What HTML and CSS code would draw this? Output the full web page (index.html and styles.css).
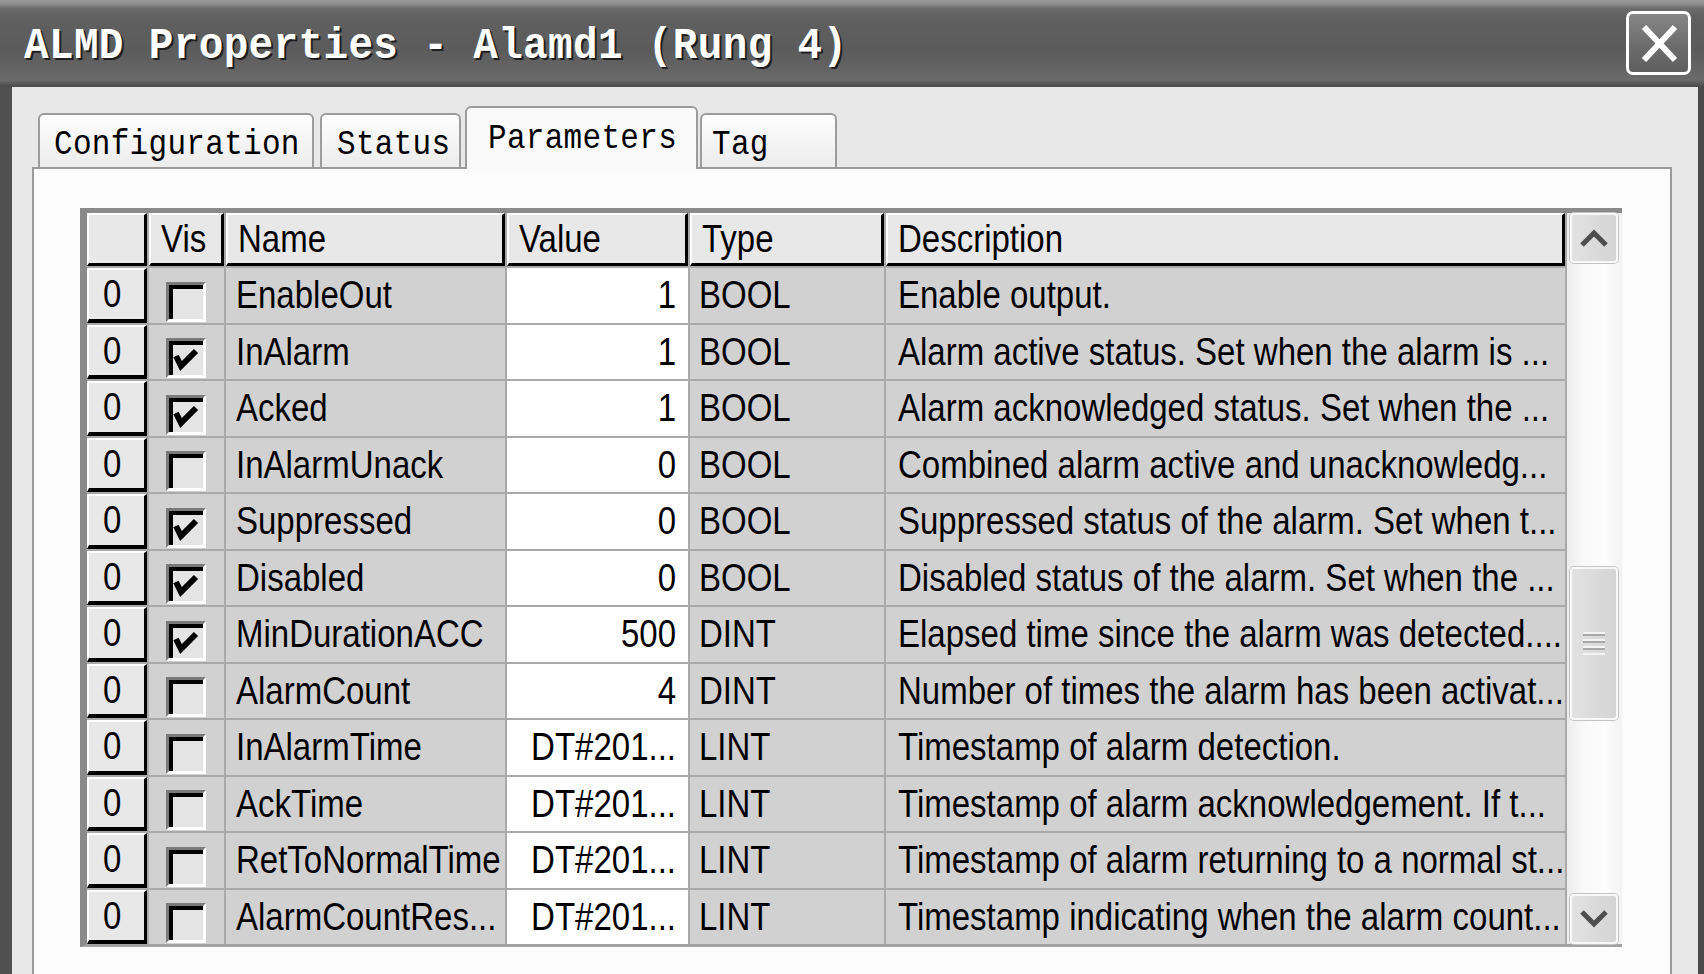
FILE: index.html
```html
<!DOCTYPE html>
<html>
<head>
<meta charset="utf-8">
<title>ALMD Properties</title>
<link rel="stylesheet" href="styles.css">
</head>
<body>
<div class="window">
  <div class="titlebar">
    <div class="title">ALMD Properties - Alamd1 (Rung 4)</div>
    <div class="close">
      <svg width="59" height="58" viewBox="0 0 59 58"><line x1="15" y1="13" x2="46" y2="46"/><line x1="46" y1="13" x2="15" y2="46"/></svg>
    </div>
  </div>
  <div class="body">
    <div class="tabs">
      <div class="tab tab-config"><span class="lbl">Configuration</span></div>
      <div class="tab tab-status"><span class="lbl">Status</span></div>
      <div class="tab tab-params"><span class="lbl">Parameters</span></div>
      <div class="tab tab-tag"><span class="lbl">Tag</span></div>
    </div>
    <div class="panel">
      <div class="grid">
        <div class="table">
          <div class="hc corner"></div>
          <div class="hc"><span class="tx">Vis</span></div>
          <div class="hc"><span class="tx">Name</span></div>
          <div class="hc"><span class="tx">Value</span></div>
          <div class="hc"><span class="tx">Type</span></div>
          <div class="hc"><span class="tx">Description</span></div>

          <div class="rh"><span class="tx">0</span></div>
          <div class="c vis"><div class="cb"></div></div>
          <div class="c"><span class="tx">EnableOut</span></div>
          <div class="c val"><span class="tx">1</span></div>
          <div class="c type"><span class="tx">BOOL</span></div>
          <div class="c desc"><span class="tx">Enable output.</span></div>

          <div class="rh"><span class="tx">0</span></div>
          <div class="c vis"><div class="cb"><svg width="34" height="34" viewBox="0 0 34 34"><polyline points="7,15 12,25 27,10"/></svg></div></div>
          <div class="c"><span class="tx">InAlarm</span></div>
          <div class="c val"><span class="tx">1</span></div>
          <div class="c type"><span class="tx">BOOL</span></div>
          <div class="c desc"><span class="tx">Alarm active status. Set when the alarm is ...</span></div>

          <div class="rh"><span class="tx">0</span></div>
          <div class="c vis"><div class="cb"><svg width="34" height="34" viewBox="0 0 34 34"><polyline points="7,15 12,25 27,10"/></svg></div></div>
          <div class="c"><span class="tx">Acked</span></div>
          <div class="c val"><span class="tx">1</span></div>
          <div class="c type"><span class="tx">BOOL</span></div>
          <div class="c desc"><span class="tx">Alarm acknowledged status. Set when the ...</span></div>

          <div class="rh"><span class="tx">0</span></div>
          <div class="c vis"><div class="cb"></div></div>
          <div class="c"><span class="tx">InAlarmUnack</span></div>
          <div class="c val"><span class="tx">0</span></div>
          <div class="c type"><span class="tx">BOOL</span></div>
          <div class="c desc"><span class="tx">Combined alarm active and unacknowledg...</span></div>

          <div class="rh"><span class="tx">0</span></div>
          <div class="c vis"><div class="cb"><svg width="34" height="34" viewBox="0 0 34 34"><polyline points="7,15 12,25 27,10"/></svg></div></div>
          <div class="c"><span class="tx">Suppressed</span></div>
          <div class="c val"><span class="tx">0</span></div>
          <div class="c type"><span class="tx">BOOL</span></div>
          <div class="c desc"><span class="tx">Suppressed status of the alarm. Set when t...</span></div>

          <div class="rh"><span class="tx">0</span></div>
          <div class="c vis"><div class="cb"><svg width="34" height="34" viewBox="0 0 34 34"><polyline points="7,15 12,25 27,10"/></svg></div></div>
          <div class="c"><span class="tx">Disabled</span></div>
          <div class="c val"><span class="tx">0</span></div>
          <div class="c type"><span class="tx">BOOL</span></div>
          <div class="c desc"><span class="tx">Disabled status of the alarm. Set when the ...</span></div>

          <div class="rh"><span class="tx">0</span></div>
          <div class="c vis"><div class="cb"><svg width="34" height="34" viewBox="0 0 34 34"><polyline points="7,15 12,25 27,10"/></svg></div></div>
          <div class="c"><span class="tx">MinDurationACC</span></div>
          <div class="c val"><span class="tx">500</span></div>
          <div class="c type"><span class="tx">DINT</span></div>
          <div class="c desc"><span class="tx">Elapsed time since the alarm was detected....</span></div>

          <div class="rh"><span class="tx">0</span></div>
          <div class="c vis"><div class="cb"></div></div>
          <div class="c"><span class="tx">AlarmCount</span></div>
          <div class="c val"><span class="tx">4</span></div>
          <div class="c type"><span class="tx">DINT</span></div>
          <div class="c desc"><span class="tx">Number of times the alarm has been activat...</span></div>

          <div class="rh"><span class="tx">0</span></div>
          <div class="c vis"><div class="cb"></div></div>
          <div class="c"><span class="tx">InAlarmTime</span></div>
          <div class="c val"><span class="tx">DT#201...</span></div>
          <div class="c type"><span class="tx">LINT</span></div>
          <div class="c desc"><span class="tx">Timestamp of alarm detection.</span></div>

          <div class="rh"><span class="tx">0</span></div>
          <div class="c vis"><div class="cb"></div></div>
          <div class="c"><span class="tx">AckTime</span></div>
          <div class="c val"><span class="tx">DT#201...</span></div>
          <div class="c type"><span class="tx">LINT</span></div>
          <div class="c desc"><span class="tx">Timestamp of alarm acknowledgement. If t...</span></div>

          <div class="rh"><span class="tx">0</span></div>
          <div class="c vis"><div class="cb"></div></div>
          <div class="c"><span class="tx">RetToNormalTime</span></div>
          <div class="c val"><span class="tx">DT#201...</span></div>
          <div class="c type"><span class="tx">LINT</span></div>
          <div class="c desc"><span class="tx">Timestamp of alarm returning to a normal st...</span></div>

          <div class="rh"><span class="tx">0</span></div>
          <div class="c vis"><div class="cb"></div></div>
          <div class="c"><span class="tx">AlarmCountRes...</span></div>
          <div class="c val"><span class="tx">DT#201...</span></div>
          <div class="c type"><span class="tx">LINT</span></div>
          <div class="c desc"><span class="tx">Timestamp indicating when the alarm count...</span></div>
        </div>
        <div class="scrollbar">
          <div class="sbtn up"><svg width="30" height="20" viewBox="0 0 30 20"><polyline points="3,17 15,5 27,17"/></svg></div>
          <div class="thumb"><svg width="22" height="24" viewBox="0 0 22 24"><rect class="g1" x="0" y="0" width="22" height="2"/><rect class="g2" x="0" y="2" width="22" height="2"/><rect class="g1" x="0" y="7" width="22" height="2"/><rect class="g2" x="0" y="9" width="22" height="2"/><rect class="g1" x="0" y="14" width="22" height="2"/><rect class="g2" x="0" y="16" width="22" height="2"/><rect class="g1" x="0" y="21" width="22" height="2"/></svg></div>
          <div class="sbtn down"><svg width="30" height="20" viewBox="0 0 30 20"><polyline points="3,3 15,15 27,3"/></svg></div>
        </div>
      </div>
    </div>
  </div>
</div>
</body>
</html>
```

FILE: styles.css
```css
html, body {
  margin: 0;
  padding: 0;
}

body {
  width: 1704px;
  height: 974px;
  overflow: hidden;
  background: #e8e8e8;
  font-family: "Liberation Sans", Arial, sans-serif;
  color: #000;
}

.window {
  width: 1704px;
  height: 974px;
  display: flex;
  flex-direction: column;
}

/* ---------- title bar ---------- */
.titlebar {
  flex: none;
  height: 87px;
  box-sizing: border-box;
  display: flex;
  align-items: center;
  padding: 0 13px 0 24px;
  background: linear-gradient(to bottom,
    #9b9b9b 0, #8c8c8c 4px, #6e6e6e 8px, #606060 16px,
    #5b5b5b 50px, #636363 68px, #6b6b6b 80px, #565656 84px, #4a4a4a 87px);
}

.title {
  font-family: "Liberation Mono", "DejaVu Sans Mono", monospace;
  font-weight: bold;
  font-size: 41px;
  letter-spacing: 0.35px;
  color: #fff;
  text-shadow: 2px 2px 0 #1e1e1e;
  white-space: nowrap;
  transform: scaleY(1.1);
  margin-top: 4px;
}

.close {
  margin-left: auto;
  margin-top: -2px;
  width: 65px;
  height: 64px;
  box-sizing: border-box;
  border: 3px solid #fff;
  border-radius: 7px;
  background: linear-gradient(#868686, #6c6c6c 55%, #5f5f5f);
  display: flex;
  align-items: center;
  justify-content: center;
}

.close svg {
  display: block;
}

.close line {
  stroke: #fff;
  stroke-width: 6;
}

/* ---------- dialog body ---------- */
.body {
  flex: 1;
  min-height: 0;
  display: flex;
  flex-direction: column;
  border-left: 12px solid #505050;
  border-right: 6px solid #4a4a4a;
  padding: 0 26px 0 20px;
}

.tabs {
  flex: none;
  height: 80px;
  display: flex;
  align-items: flex-end;
  padding-left: 6px;
}

.tab {
  position: relative;
  box-sizing: border-box;
  height: 54px;
  border: 2px solid #9c9c9c;
  border-bottom: 0;
  border-radius: 6px 6px 0 0;
  background: linear-gradient(#fefefe, #ececec);
  font-family: "Liberation Mono", "DejaVu Sans Mono", monospace;
  font-size: 31px;
  letter-spacing: 0.3px;
  display: flex;
  align-items: center;
  white-space: nowrap;
}

.tab .lbl {
  display: inline-block;
  transform: scaleY(1.15);
  margin-top: 6px;
}

.tab-config {
  width: 276px;
  padding-left: 14px;
  margin-right: 6px;
}

.tab-status {
  width: 141px;
  padding-left: 15px;
  margin-right: 4px;
}

.tab-params {
  width: 233px;
  height: 63px;
  padding-left: 21px;
  margin-right: 2px;
  margin-bottom: -2px;
  z-index: 2;
  background: #fafafa;
}

.tab-params .lbl {
  margin-top: 0;
}

.tab-tag {
  width: 137px;
  padding-left: 10px;
}

.panel {
  flex: 1;
  min-height: 0;
  background: #fcfcfc;
  border: 2px solid #9a9a9a;
  border-bottom: 0;
  padding: 39px 0 0 46px;
}

/* ---------- grid ---------- */
.grid {
  width: 1542px;
  box-sizing: border-box;
  display: flex;
  gap: 2px;
  background: #a9a9a9;
  border-top: 5px solid #8a8a8a;
  border-left: 7px solid #8a8a8a;
  border-bottom: 3px solid #a2a2a2;
}

.table {
  display: grid;
  grid-template-columns: 60px 75px 279px 181px 194px 679px;
  grid-template-rows: 53px repeat(12, 54.5px);
  gap: 2px;
}

.tx {
  display: inline-block;
  transform: scaleY(1.15);
}

.hc,
.rh {
  box-sizing: border-box;
  background: #e8e8e8;
  border-top: 2px solid #fff;
  border-left: 2px solid #fff;
  border-right: 3px solid #000;
  border-bottom: 3px solid #000;
  display: flex;
  align-items: center;
  padding-left: 10px;
  font-size: 33px;
  white-space: nowrap;
  overflow: hidden;
}

.rh {
  padding-left: 14px;
  border-bottom-width: 4px;
}

.c {
  background: #d1d1d1;
  display: flex;
  align-items: center;
  padding-left: 10px;
  font-size: 33px;
  white-space: nowrap;
  overflow: hidden;
}

.c.type {
  padding-left: 9px;
}

.c.desc {
  padding-left: 12px;
}

.c.val {
  background: #fff;
  justify-content: flex-end;
  padding: 0 12px 0 0;
}

.c.vis {
  align-items: flex-end;
  padding: 0 0 1px 17px;
}

.cb {
  width: 40px;
  height: 40px;
  box-sizing: border-box;
  border-top: 3px solid #7a7a7a;
  border-left: 3px solid #7a7a7a;
  border-right: 3px solid #fff;
  border-bottom: 3px solid #fff;
  box-shadow: inset 4px 4px 0 #000;
  background: #e4e4e4;
}

.cb svg {
  display: block;
}

.cb polyline {
  fill: none;
  stroke: #000;
  stroke-width: 6;
}

/* ---------- scrollbar ---------- */
.scrollbar {
  flex: 1;
  display: flex;
  flex-direction: column;
  align-items: flex-start;
  padding-left: 3px;
  background: linear-gradient(to right, #ececec, #f9f9f9 30%, #fdfdfd 70%, #f2f2f2);
}

.sbtn,
.thumb {
  width: 48px;
  box-sizing: border-box;
  border: 2px solid #f8f8f8;
  border-radius: 4px;
  box-shadow: 0 0 0 1px #c4c4c4;
  background: linear-gradient(to right, #e2e2e2, #d4d4d4);
  display: flex;
  align-items: center;
  justify-content: center;
}

.sbtn {
  height: 50px;
}

.sbtn svg {
  display: block;
}

.sbtn polyline {
  fill: none;
  stroke: #4e4e4e;
  stroke-width: 5;
}

.thumb {
  height: 153px;
  margin-top: 304px;
}

.thumb .g1 {
  fill: #f4f4f4;
}

.thumb .g2 {
  fill: #a8a8a8;
}

.sbtn.down {
  margin-top: auto;
  margin-bottom: 0;
}
```
